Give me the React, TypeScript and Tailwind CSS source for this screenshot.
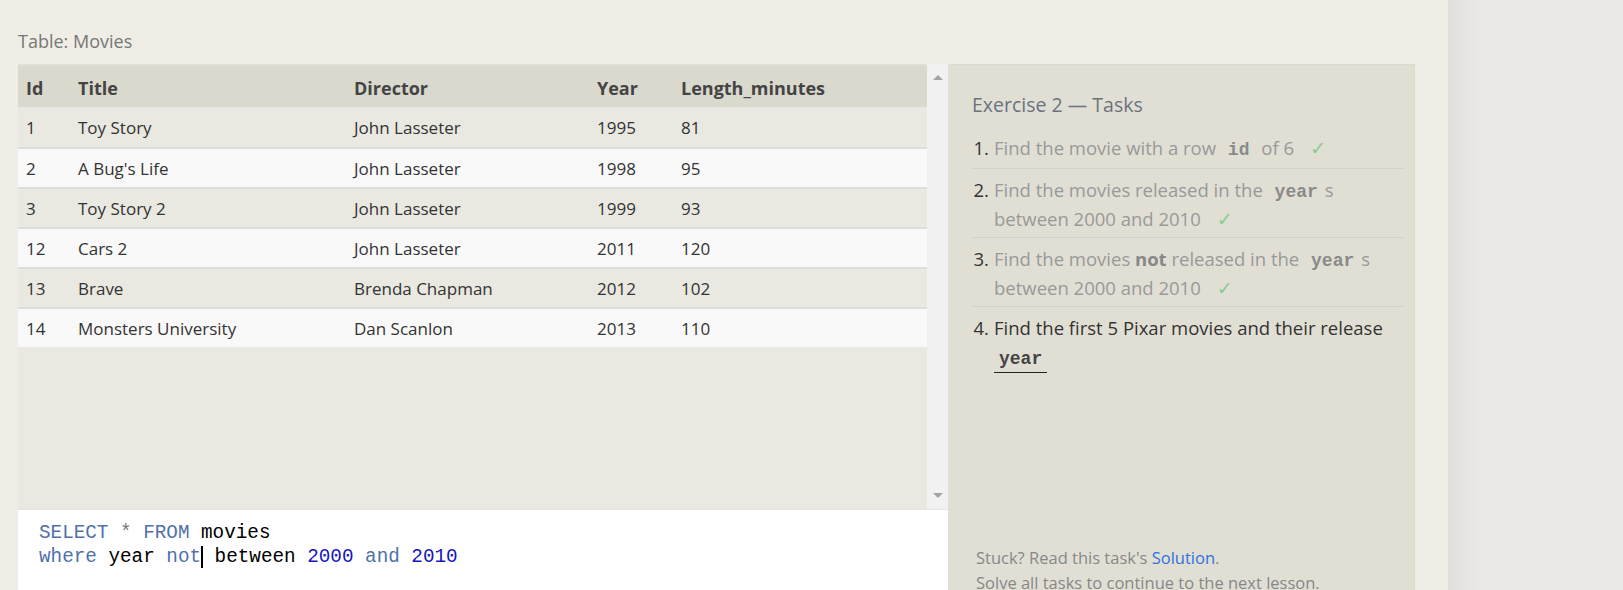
const rows = [
  ["1", "Toy Story", "John Lasseter", "1995", "81"],
  ["2", "A Bug's Life", "John Lasseter", "1998", "95"],
  ["3", "Toy Story 2", "John Lasseter", "1999", "93"],
  ["12", "Cars 2", "John Lasseter", "2011", "120"],
  ["13", "Brave", "Brenda Chapman", "2012", "102"],
  ["14", "Monsters University", "Dan Scanlon", "2013", "110"],
];

const cols = "grid grid-cols-[52px_276px_243px_84px_1fr]";
const sans = { fontFamily: '"Open Sans", "Noto Sans", sans-serif' };
const mono = { fontFamily: '"Liberation Mono", "DejaVu Sans Mono", monospace' };

function Check() {
  return (
    <span style={{ fontFamily: '"DejaVu Sans", sans-serif' }} className="ml-[16px] text-[19px] leading-none text-[#86cc95]">
      ✓
    </span>
  );
}

function Code({ children, done = true }: { children: React.ReactNode; done?: boolean }) {
  return (
    <code
      style={mono}
      className={
        done
          ? "px-[7px] text-[18px] font-bold leading-none text-[#8a8a8a]"
          : "inline-block border-b border-[#222] px-[5px] text-[18px] font-bold leading-[26px] text-[#444]"
      }
    >
      {children}
    </code>
  );
}

export default function App() {
  return (
    <div style={sans} className="flex h-[590px] w-[1623px] overflow-hidden">
      {/* main lesson area */}
      <div className="w-[1448px] shrink-0 bg-[#f0ede6] pl-[18px] pt-[29px]">
        <div className="h-[24px] text-[18px] leading-[24px] text-[#777]">Table: Movies</div>

        <div className="mt-[11px] flex">
          {/* table + editor */}
          <div className="flex w-[930px] flex-col">
            <div className="flex h-[445px]">
              <div className="w-[909px] border-t-2 border-[#e2dfd9] bg-[#e9e8e1] text-[#333]">
                <div className={`${cols} h-[41px] items-center bg-[#dad9cd] pt-[3px] text-[18px] font-bold text-[#444]`}>
                  <div className="pl-[8px]">Id</div>
                  <div className="pl-[8px]">Title</div>
                  <div className="pl-[8px]">Director</div>
                  <div className="pl-[8px]">Year</div>
                  <div className="pl-[8px]">Length_minutes</div>
                </div>
                {rows.map((r, i) => (
                  <div
                    key={r[0]}
                    className={`${cols} items-center pt-[1px] text-[17px] ${
                      i === 0 ? "h-[40px]" : "h-[40px] border-t-2 border-[#dcdcda]"
                    } ${i % 2 === 0 ? "bg-[#e9e8e1]" : "bg-[#f9f9f9]"}`}
                  >
                    {r.map((c, j) => (
                      <div key={j} className="pl-[8px]">
                        {c}
                      </div>
                    ))}
                  </div>
                ))}
              </div>
              {/* scrollbar */}
              <div className="flex w-[21px] flex-col items-center justify-between bg-[#f1f1f1] py-[11px]">
                <div className="h-0 w-0 border-x-[5px] border-b-[5px] border-x-transparent border-b-[#a3a3a3]" />
                <div className="h-0 w-0 border-x-[5px] border-t-[5px] border-x-transparent border-t-[#a3a3a3]" />
              </div>
            </div>

            {/* editor */}
            <div
              style={mono}
              className="h-[100px] border-t border-[#e6e5df] bg-white pl-[21px] pt-[11px] text-[19.3px] leading-[24px]"
            >
              <div>
                <span className="text-[#4f71aa]">SELECT</span> <span className="text-[#777]">*</span>{" "}
                <span className="text-[#4f71aa]">FROM</span> <span className="text-black">movies</span>
              </div>
              <div>
                <span className="text-[#4f71aa]">where</span> <span className="text-black">year</span>{" "}
                <span className="text-[#4f71aa]">not</span>
                <span className="inline-block h-[22px] w-0 border-l-2 border-black align-middle" />{" "}
                <span className="text-black">between</span> <span className="text-[#1616bd]">2000</span>{" "}
                <span className="text-[#4f71aa]">and</span> <span className="text-[#1616bd]">2010</span>
              </div>
            </div>
          </div>

          {/* tasks panel */}
          <div className="flex h-[540px] w-[467px] flex-col border-r border-t border-[#dbdacd] bg-[#e1dfd4] pl-[24px] pr-[10px]">
            <div className="mt-[27px] text-[19.5px] leading-[26px] text-[#6b7380]">Exercise 2 — Tasks</div>
            <ol className="mt-[15px] text-[18.5px] leading-[29px]">
              <li className="flex border-b border-[#d3d1c6] pb-[6px]">
                <span className="w-[17px] shrink-0 text-right text-[#333]">1.</span>
                <span className="pl-[5px] text-[#999]">
                  Find the movie with a row <Code>id</Code> of 6<Check />
                </span>
              </li>
              <li className="flex border-b border-[#d3d1c6] pb-[4px] pt-[6px]">
                <span className="w-[17px] shrink-0 text-right text-[#333]">2.</span>
                <span className="pl-[5px] text-[#999]">
                  Find the movies released in the <Code>year</Code>s
                  <br />
                  between 2000 and 2010
                  <Check />
                </span>
              </li>
              <li className="flex border-b border-[#d3d1c6] pb-[4px] pt-[6px]">
                <span className="w-[17px] shrink-0 text-right text-[#333]">3.</span>
                <span className="pl-[5px] text-[#999]">
                  Find the movies <b className="text-[#888]">not</b> released in the <Code>year</Code>s
                  <br />
                  between 2000 and 2010
                  <Check />
                </span>
              </li>
              <li className="flex pt-[6px]">
                <span className="w-[17px] shrink-0 text-right text-[#333]">4.</span>
                <span className="pl-[5px] text-[#333]">
                  Find the first 5 Pixar movies and their release
                  <br />
                  <Code done={false}>year</Code>
                </span>
              </li>
            </ol>
            <div className="mt-auto pb-[9px] pl-[4px] text-[16.5px] leading-[25px] text-[#888]">
              <div>
                Stuck? Read this task's <span className="text-[#2f72e0]">Solution</span>.
              </div>
              <div>Solve all tasks to continue to the next lesson.</div>
            </div>
          </div>
        </div>
      </div>

      {/* right side strip */}
      <div className="flex flex-1 bg-[#ebe7e4]">
        <div className="w-[30px] bg-linear-to-r from-[#e2dfdc] to-[#ebe7e4]" />
      </div>
    </div>
  );
}
